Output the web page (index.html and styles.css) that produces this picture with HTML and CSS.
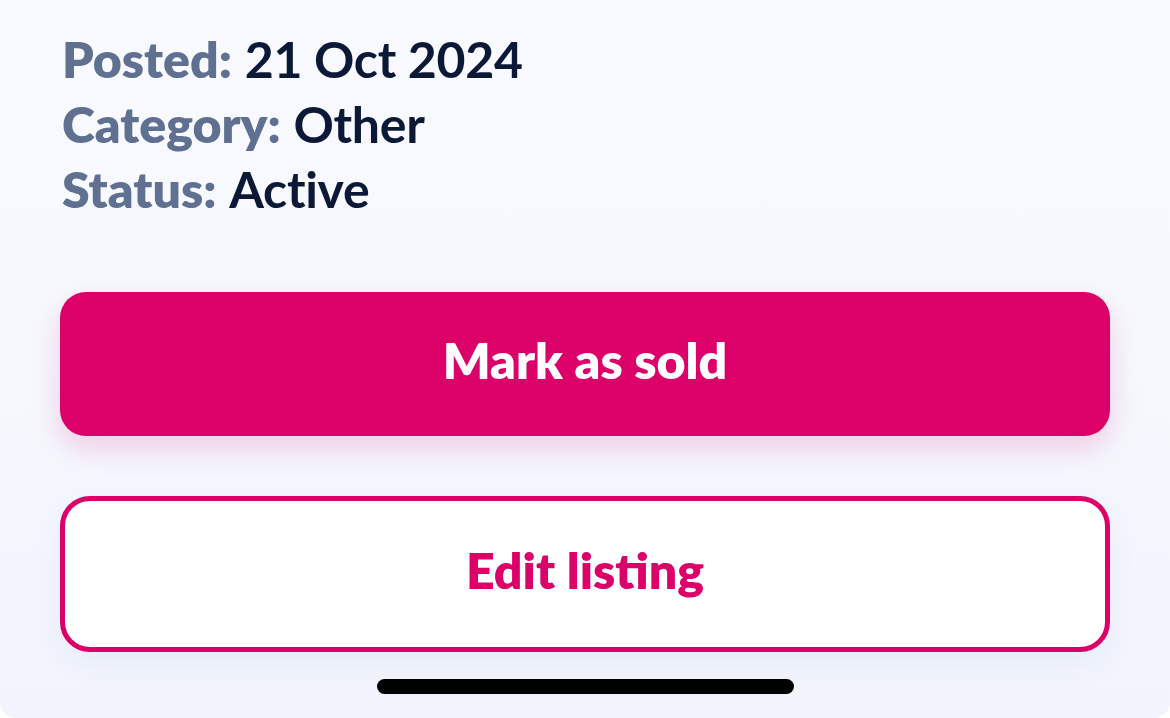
FILE: index.html
```html
<!DOCTYPE html>
<html>
<head>
<meta charset="utf-8">
<link rel="stylesheet" href="styles.css">
</head>
<body>
<div class="sheet">
  <div class="info">
    <div class="row"><span class="label">Posted:</span> <span class="value">21 Oct 2024</span></div>
    <div class="row"><span class="label">Category:</span> <span class="value">Other</span></div>
    <div class="row"><span class="label">Status:</span> <span class="value">Active</span></div>
  </div>
  <div class="actions">
    <button class="btn btn-primary">Mark as sold</button>
    <button class="btn btn-outline">Edit listing</button>
  </div>
  <div class="home-indicator"></div>
</div>
</body>
</html>
```

FILE: styles.css
```css
html, body {
  margin: 0;
  padding: 0;
  background: #ffffff;
}
body {
  width: 1170px;
  height: 718px;
  overflow: hidden;
  font-family: "Lato", "Noto Sans", sans-serif;
}
.sheet {
  box-sizing: border-box;
  width: 1170px;
  height: 718px;
  background: linear-gradient(180deg, #f9faff 0%, #f6f8fe 50%, #f1f4fc 100%);
  border-radius: 0 0 16px 16px;
  padding: 27px 60px 0 60px;
  display: flex;
  flex-direction: column;
}
.info {
  padding-left: 2px;
}
.row {
  font-size: 50px;
  line-height: 65px;
  white-space: nowrap;
}
.label {
  color: #5f7090;
  font-weight: 800;
}
.value {
  color: #0b1836;
  font-weight: 700;
  letter-spacing: -0.3px;
}
.actions {
  margin-top: 70px;
  display: flex;
  flex-direction: column;
  gap: 60px;
}
.btn {
  box-sizing: border-box;
  width: 1050px;
  font-family: inherit;
  font-size: 50px;
  font-weight: 800;
  border-radius: 26px;
  cursor: pointer;
  display: flex;
  align-items: center;
  justify-content: center;
  padding: 0 0 8px 0;
}
.btn-primary {
  height: 144px;
  background: #dc0069;
  color: #ffffff;
  border: none;
  box-shadow: 0 12px 30px rgba(220, 0, 105, 0.18);
}
.btn-outline {
  height: 156px;
  background: #ffffff;
  color: #dc0069;
  border: 5px solid #dc0069;
  border-radius: 30px;
  box-shadow: 0 10px 30px rgba(60, 90, 180, 0.06);
}
.home-indicator {
  align-self: center;
  margin-top: 27px;
  width: 417px;
  height: 15px;
  border-radius: 8px;
  background: #000000;
}
```
